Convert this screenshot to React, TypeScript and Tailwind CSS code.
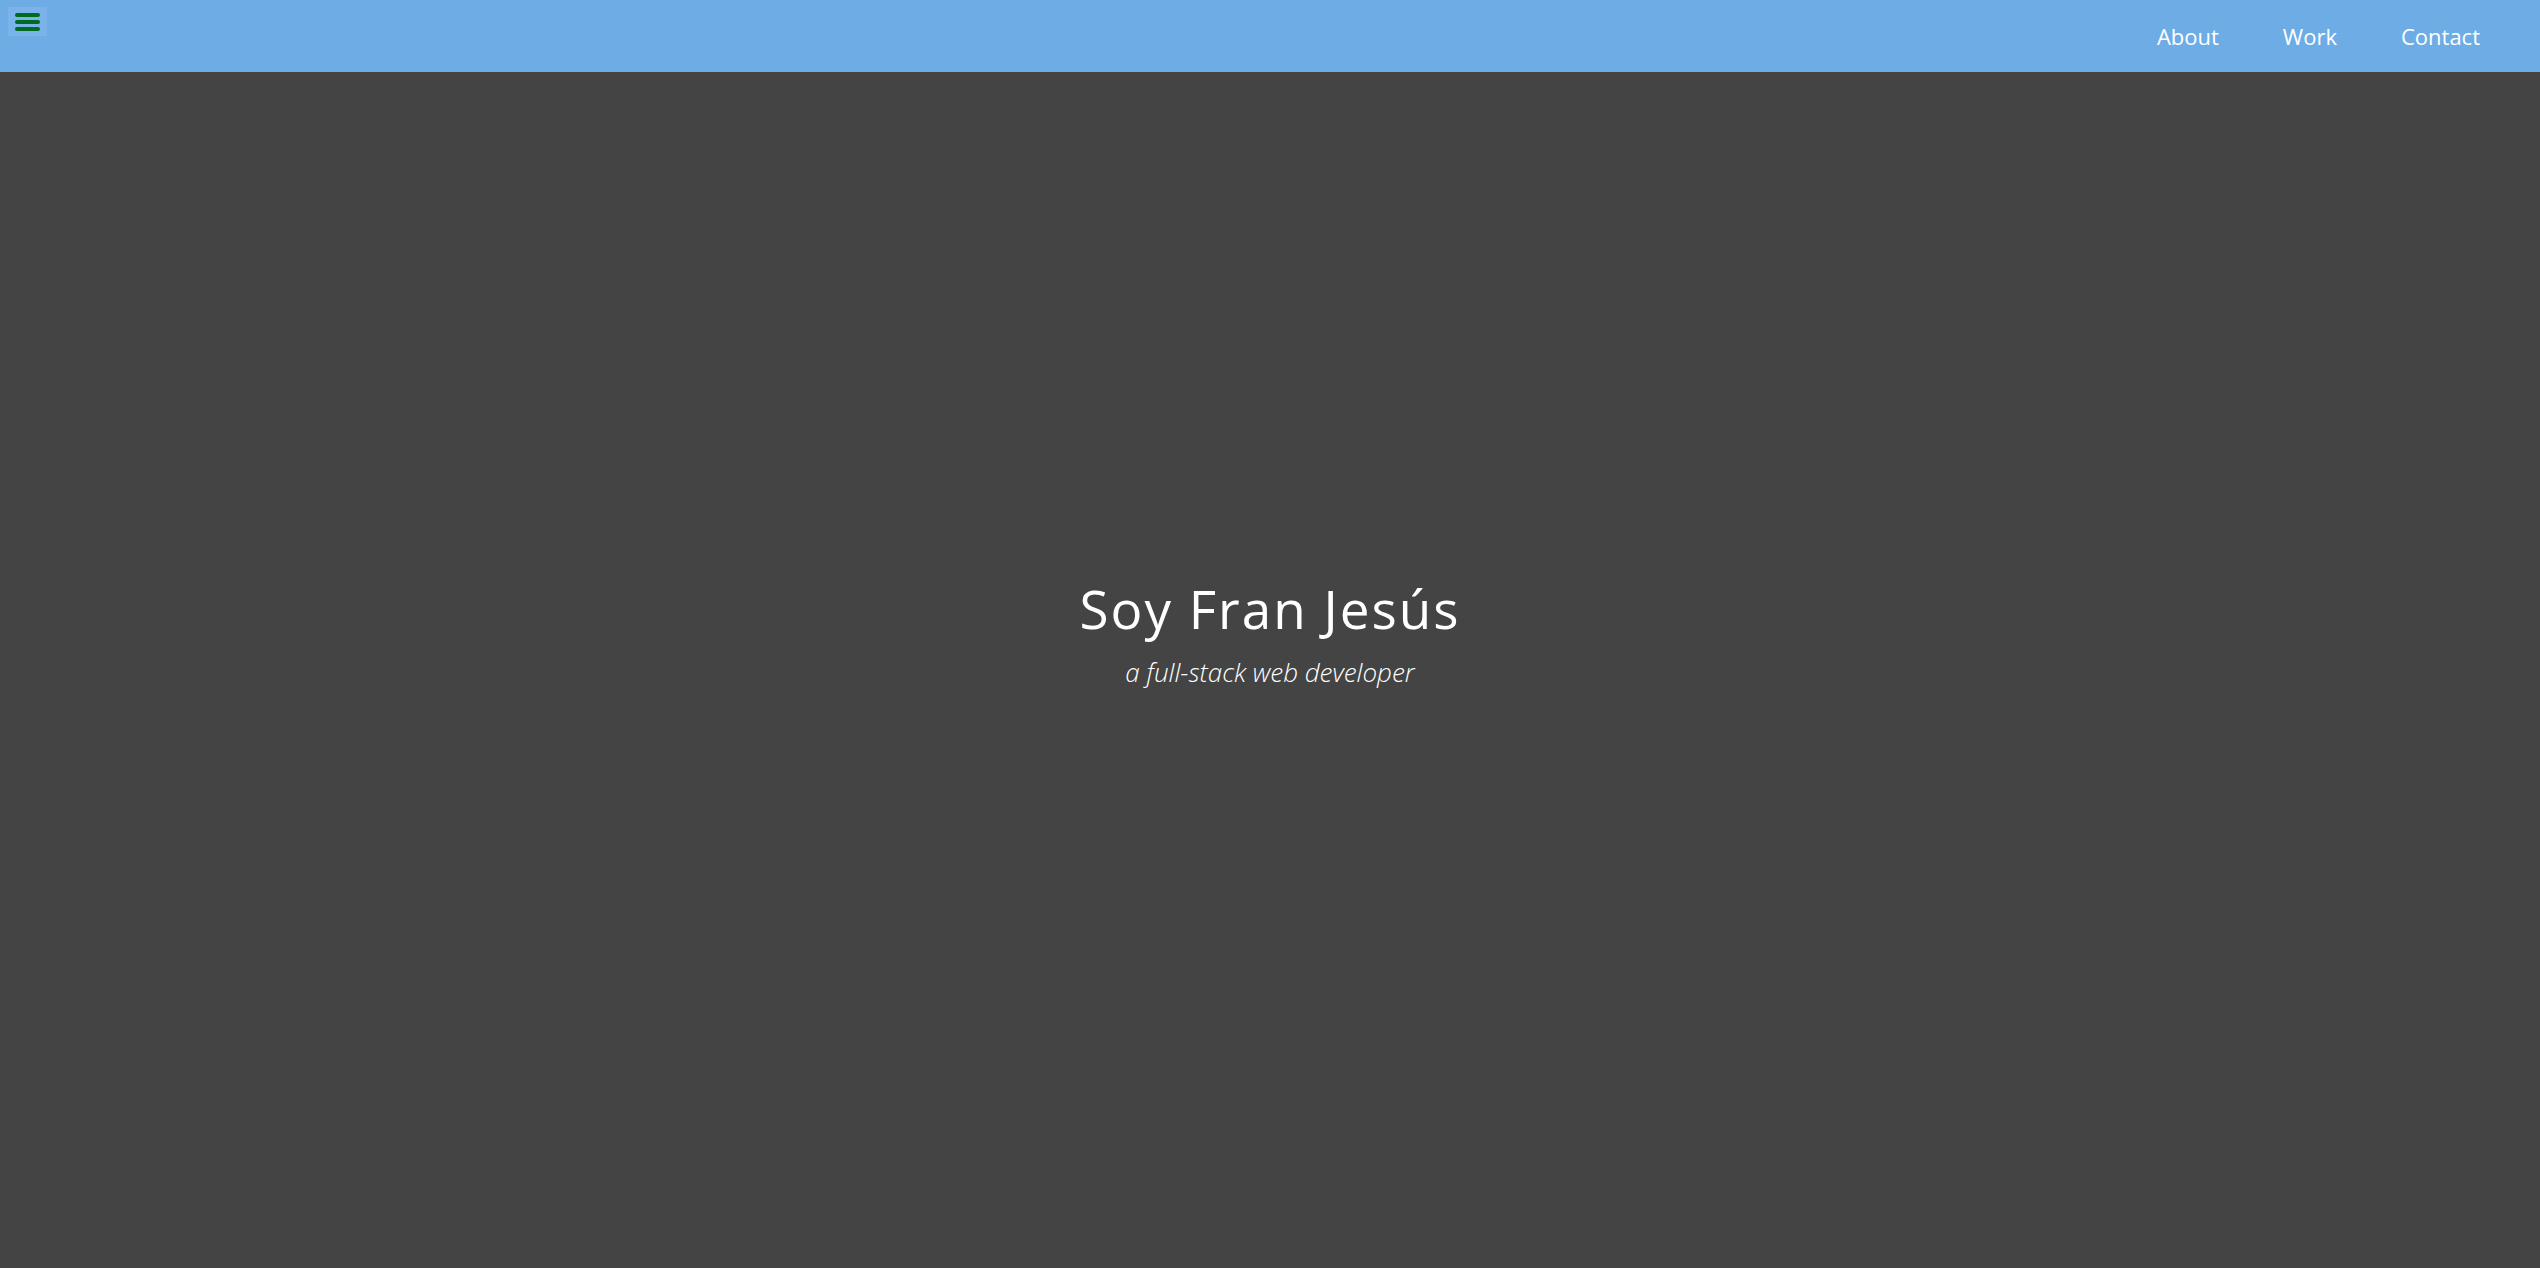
import React from 'react';

const NAV = ['About', 'Work', 'Contact'];

export default function App() {
    return (
        <div className="min-h-screen bg-[#444444] font-['Open_Sans','Lato',sans-serif] text-white">
            {/* Top bar */}
            <header className="fixed top-0 left-0 right-0 z-10 h-[72px] bg-[#6eace6] flex items-start justify-between">
                <button className="mt-[7px] ml-[8px] w-[39px] h-[29px] bg-[#7ab3e9] flex flex-col items-center justify-center gap-[3px]">
                    <span className="block w-[25px] h-[4px] rounded-full bg-[#006b1f]" />
                    <span className="block w-[25px] h-[4px] rounded-full bg-[#006b1f]" />
                    <span className="block w-[25px] h-[4px] rounded-full bg-[#006b1f]" />
                </button>
                <nav className="flex items-center h-[72px] pr-[60px] gap-[64px] text-[22px]">
                    {NAV.map((n) => (
                        <a key={n} href="#" className="text-white">{n}</a>
                    ))}
                </nav>
            </header>

            {/* Hero */}
            <main className="h-screen flex flex-col items-center justify-center">
                <h1 className="text-[53px] leading-tight font-normal tracking-[2px]">Soy Fran Jesús</h1>
                <p className="mt-[10px] text-[26px] italic font-light">a full-stack web developer</p>
            </main>
        </div>
    );
}
